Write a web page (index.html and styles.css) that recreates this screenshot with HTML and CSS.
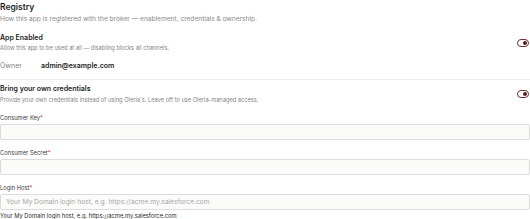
FILE: index.html
```html
<!DOCTYPE html>
<html lang="en">
<head>
  <meta charset="UTF-8" />
  <title>Registry</title>
  <link rel="stylesheet" href="styles.css">
</head>
<body>
  <div class="registry">
    <div class="section-head">
      <h2>Registry</h2>
      <p class="muted">How this app is registered with the broker — enablement, credentials &amp; ownership.</p>
    </div>

    <div class="setting-row">
      <div>
        <div class="setting-title">App Enabled</div>
        <div class="setting-desc">Allow this app to be used at all — disabling blocks all channels.</div>
      </div>
      <span class="toggle on"></span>
    </div>

    <div class="owner-row">
      <span class="owner-label">Owner</span>
      <span class="owner-value">admin@example.com</span>
    </div>

    <div class="setting-row bordered">
      <div>
        <div class="setting-title">Bring your own credentials</div>
        <div class="setting-desc">Provide your own credentials instead of using Oleria's. Leave off to use Oleria-managed access.</div>
      </div>
      <span class="toggle on"></span>
    </div>

    <div class="field">
      <label>Consumer Key<span class="req">*</span></label>
      <input type="text" />
    </div>

    <div class="field">
      <label>Consumer Secret<span class="req">*</span></label>
      <input type="text" />
    </div>

    <div class="field">
      <label>Login Host<span class="req">*</span></label>
      <input type="text" placeholder="Your My Domain login host, e.g. https://acme.my.salesforce.com" />
      <div class="hint">Your My Domain login host, e.g. https://acme.my.salesforce.com</div>
    </div>
  </div>
</body>
</html>
```

FILE: styles.css
```css
body {
  font-family: Inter, 'Noto Sans', sans-serif;
  background: #fff;
  color: #1c1c1c;
  margin: 0;
  padding: 0;
}

.registry {
  width: 530px;
}

h2 {
  font-size: 8.5px;
  font-weight: 600;
  margin: 2px 0 0;
  line-height: 10px;
}

.muted {
  color: #8a8a8a;
  font-size: 6.6px;
  margin: 3px 0 0;
  line-height: 9px;
}

.setting-row {
  display: flex;
  justify-content: space-between;
  align-items: center;
  padding-top: 9px;
}

.setting-row.bordered {
  border-top: 1px solid #ececec;
  margin-top: 9px;
  padding-top: 4px;
}

.setting-title {
  font-size: 7px;
  font-weight: 600;
  line-height: 9px;
}

.setting-desc {
  font-size: 5.7px;
  color: #858585;
  line-height: 9px;
  margin-top: 1px;
}

.bordered .setting-desc {
  margin-top: 2px;
}

.toggle {
  width: 10px;
  height: 6px;
  border: 1px solid #6e2f33;
  border-radius: 4px;
  position: relative;
  margin-right: 1px;
}

.toggle.on::after {
  content: "";
  position: absolute;
  right: 1px;
  top: 1px;
  width: 4px;
  height: 4px;
  border-radius: 50%;
  background: #5a1c22;
}

.owner-row {
  display: flex;
  font-size: 7px;
  margin-top: 9px;
  line-height: 9px;
}

.owner-label {
  color: #808080;
  width: 41px;
}

.owner-value {
  font-weight: 600;
}

.field {
  margin-top: 10px;
}

.field + .field {
  margin-top: 9px;
}

.field label {
  display: block;
  font-size: 5.8px;
  color: #3a3a3a;
  line-height: 8px;
}

.req {
  color: #d0312d;
}

.field input {
  display: block;
  box-sizing: border-box;
  width: 100%;
  height: 16px;
  margin-top: 2px;
  border: 1px solid #dcdcdc;
  border-radius: 2px;
  background: #fbfbfa;
  padding: 0 5px;
  font-family: inherit;
  font-size: 6.7px;
}

.field input::placeholder {
  color: #a8a8a8;
}

.hint {
  font-size: 5.8px;
  color: #2a2a2a;
  line-height: 8px;
  margin-top: 2px;
}
```
